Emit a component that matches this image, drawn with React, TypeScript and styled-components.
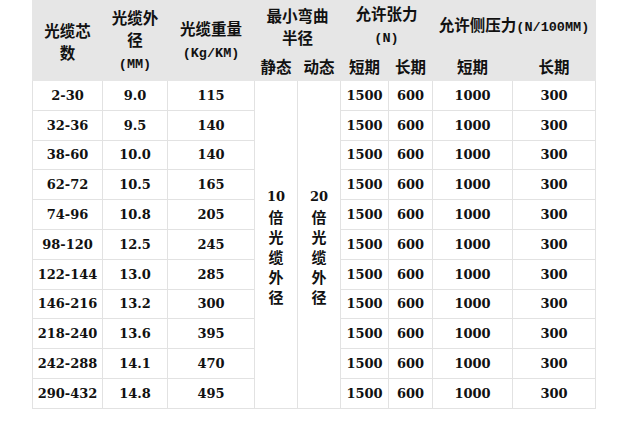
import React from "react";
import styled, { createGlobalStyle } from "styled-components";

const Global = createGlobalStyle`
  html, body { margin: 0; padding: 0; background: #ffffff; }
  body { font-family: "Noto Sans CJK SC", sans-serif; color: #111; }
`;

const Page = styled.div`
  padding: 0 0 0 32px;
`;

const Table = styled.table`
  border-collapse: collapse;
  table-layout: fixed;
  width: 563px;
`;

const HeadRow = styled.tr<{ $h: number }>`
  height: ${(p) => p.$h}px;
  background: #e6e6e6;
`;

const Th = styled.th`
  padding: 0;
  border: 1px solid #e6e6e6;
  font-family: "Noto Sans CJK SC", sans-serif;
  font-size: 15.5px;
  font-weight: 700;
  line-height: 22px;
  color: #111;
  text-align: center;
  vertical-align: middle;
  white-space: nowrap;
`;

const Latin = styled.span`
  font-family: "Liberation Mono", monospace;
  font-size: 13.5px;
  font-weight: 700;
`;

const BodyRow = styled.tr`
  height: 29.8px;
`;

const Td = styled.td`
  padding: 0;
  border: 1px solid #e2e2e2;
  font-family: "DejaVu Serif", "Liberation Serif", serif;
  font-size: 13px;
  font-weight: 700;
  color: #111;
  text-align: center;
  vertical-align: middle;
  white-space: nowrap;
`;

const Vertical = styled.td`
  padding: 0;
  border: 1px solid #e2e2e2;
  text-align: center;
  vertical-align: middle;
`;

const VStack = styled.div`
  display: flex;
  flex-direction: column;
  align-items: center;
  padding-top: 6px;
  font-family: "Noto Sans CJK SC", sans-serif;
  font-size: 15px;
  font-weight: 700;
  line-height: 20px;
  color: #111;
`;

const Num = styled.span`
  font-family: "DejaVu Serif", "Liberation Serif", serif;
  font-size: 13px;
`;

const widths = [70, 65, 87, 43, 43, 48, 44, 80, 83];

const rows: [string, string, string][] = [
  ["2-30", "9.0", "115"],
  ["32-36", "9.5", "140"],
  ["38-60", "10.0", "140"],
  ["62-72", "10.5", "165"],
  ["74-96", "10.8", "205"],
  ["98-120", "12.5", "245"],
  ["122-144", "13.0", "285"],
  ["146-216", "13.2", "300"],
  ["218-240", "13.6", "395"],
  ["242-288", "14.1", "470"],
  ["290-432", "14.8", "495"],
];

const VText = ({ n }: { n: string }) => (
  <VStack>
    <Num>{n}</Num>
    {"倍光缆外径".split("").map((c, i) => (
      <span key={i}>{c}</span>
    ))}
  </VStack>
);

export default function App() {
  return (
    <>
      <Global />
      <Page>
        <Table>
          <colgroup>
            {widths.map((w, i) => (
              <col key={i} style={{ width: w }} />
            ))}
          </colgroup>
          <thead>
            <HeadRow $h={50}>
              <Th rowSpan={2}>
                光缆芯
                <br />数
              </Th>
              <Th rowSpan={2}>
                光缆外
                <br />径
                <br />
                <Latin>(MM)</Latin>
              </Th>
              <Th rowSpan={2}>
                光缆重量
                <br />
                <Latin>(Kg/KM)</Latin>
              </Th>
              <Th colSpan={2}>
                最小弯曲
                <br />半径
              </Th>
              <Th colSpan={2}>
                允许张力
                <br />
                <Latin>(N)</Latin>
              </Th>
              <Th colSpan={2}>
                允许侧压力<Latin>(N/100MM)</Latin>
              </Th>
            </HeadRow>
            <HeadRow $h={30}>
              <Th>静态</Th>
              <Th>动态</Th>
              <Th>短期</Th>
              <Th>长期</Th>
              <Th>短期</Th>
              <Th>长期</Th>
            </HeadRow>
          </thead>
          <tbody>
            {rows.map((r, i) => (
              <BodyRow key={i}>
                <Td>{r[0]}</Td>
                <Td>{r[1]}</Td>
                <Td>{r[2]}</Td>
                {i === 0 && (
                  <>
                    <Vertical rowSpan={rows.length}>
                      <VText n="10" />
                    </Vertical>
                    <Vertical rowSpan={rows.length}>
                      <VText n="20" />
                    </Vertical>
                  </>
                )}
                <Td>1500</Td>
                <Td>600</Td>
                <Td>1000</Td>
                <Td>300</Td>
              </BodyRow>
            ))}
          </tbody>
        </Table>
      </Page>
    </>
  );
}
